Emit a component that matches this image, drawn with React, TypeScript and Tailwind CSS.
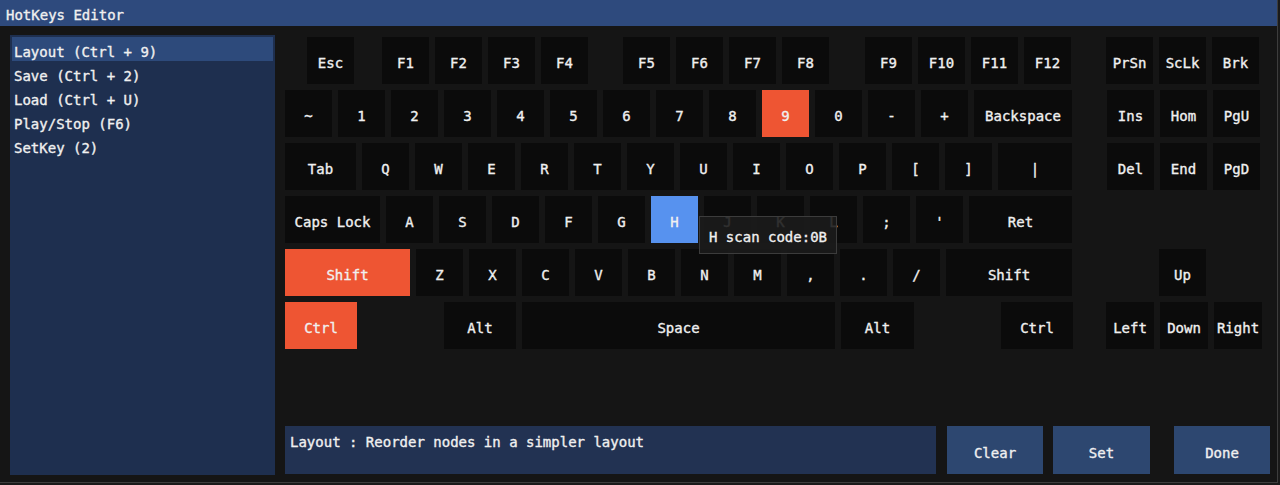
import React from "react";

type K = { l: string; w?: number; ml?: number; c?: "o" | "b" };

const rows: K[][] = [
  [
    { l: "Esc", ml: 22 },
    { l: "F1", ml: 22 },
    { l: "F2" },
    { l: "F3" },
    { l: "F4" },
    { l: "F5", ml: 29 },
    { l: "F6" },
    { l: "F7" },
    { l: "F8" },
    { l: "F9", ml: 30 },
    { l: "F10" },
    { l: "F11" },
    { l: "F12" },
    { l: "PrSn", ml: 29 },
    { l: "ScLk" },
    { l: "Brk" },
  ],
  [
    { l: "~" },
    { l: "1" },
    { l: "2" },
    { l: "3" },
    { l: "4" },
    { l: "5" },
    { l: "6" },
    { l: "7" },
    { l: "8" },
    { l: "9", c: "o" },
    { l: "0" },
    { l: "-" },
    { l: "+" },
    { l: "Backspace", w: 98 },
    { l: "Ins", ml: 29 },
    { l: "Hom" },
    { l: "PgU" },
  ],
  [
    { l: "Tab", w: 71 },
    { l: "Q" },
    { l: "W" },
    { l: "E" },
    { l: "R" },
    { l: "T" },
    { l: "Y" },
    { l: "U" },
    { l: "I" },
    { l: "O" },
    { l: "P" },
    { l: "[" },
    { l: "]" },
    { l: "|", w: 74 },
    { l: "Del", ml: 29 },
    { l: "End" },
    { l: "PgD" },
  ],
  [
    { l: "Caps Lock", w: 95 },
    { l: "A" },
    { l: "S" },
    { l: "D" },
    { l: "F" },
    { l: "G" },
    { l: "H", c: "b" },
    { l: "J" },
    { l: "K" },
    { l: "L" },
    { l: ";" },
    { l: "'" },
    { l: "Ret", w: 103 },
  ],
  [
    { l: "Shift", w: 125, c: "o" },
    { l: "Z" },
    { l: "X" },
    { l: "C" },
    { l: "V" },
    { l: "B" },
    { l: "N" },
    { l: "M" },
    { l: "," },
    { l: "." },
    { l: "/" },
    { l: "Shift", w: 126 },
    { l: "Up", ml: 81 },
  ],
  [
    { l: "Ctrl", w: 72, c: "o" },
    { l: "Alt", w: 72, ml: 81 },
    { l: "Space", w: 313 },
    { l: "Alt", w: 73 },
    { l: "Ctrl", w: 72, ml: 81 },
    { l: "Left", w: 48, ml: 27 },
    { l: "Down", w: 48 },
    { l: "Right", w: 48 },
  ],
];

function Key({ k }: { k: K }) {
  const bg =
    k.c === "o" ? "bg-[#ee5533]" : k.c === "b" ? "bg-[#5792ef]" : "bg-[#0b0b0b]";
  return (
    <div
      className={`${bg} h-[47px] shrink-0 flex items-center justify-center pt-[4px]`}
      style={{ width: k.w ?? 47, marginLeft: k.ml ?? 0 }}
    >
      {k.l}
    </div>
  );
}

const items = [
  "Layout (Ctrl + 9)",
  "Save (Ctrl + 2)",
  "Load (Ctrl + U)",
  "Play/Stop (F6)",
  "SetKey (2)",
];

export default function App() {
  return (
    <div
      className="w-[1280px] h-[485px] bg-[#1a1a1a] text-[14px] leading-none text-[#f0f0f0] overflow-hidden [-webkit-text-stroke:0.35px_#f0f0f0]"
      style={{ fontFamily: '"DejaVu Sans Mono", monospace' }}
    >
      <div className="w-[1278px] h-[483px] bg-[#151515] border-r border-b border-[#3d3d3d] flex flex-col">
        <div className="h-[26px] bg-[#2e4a7d] flex items-center pl-[6px] pt-[3px] shrink-0">
          HotKeys Editor
        </div>
        <div className="flex flex-1 pl-[10px] pt-[9px] gap-[10px]">
          <div className="w-[265px] h-[440px] bg-[#1e2f4f] p-[2px] flex flex-col">
            {items.map((t, i) => (
              <div
                key={t}
                className={`h-[24px] flex items-center pl-[2px] pt-[5px] ${
                  i === 0 ? "bg-[#2d4a7b]" : ""
                }`}
              >
                {t}
              </div>
            ))}
          </div>
          <div className="w-[985px] flex flex-col pt-[2px]">
            <div className="relative flex flex-col gap-[6px]">
              {rows.map((r, i) => (
                <div key={i} className="flex gap-[6px]">
                  {r.map((k, j) => (
                    <Key key={j} k={k} />
                  ))}
                </div>
              ))}
              <div className="absolute left-[414px] top-[179px] h-[38px] px-[9px] pt-[3px] bg-[#1b1b1b]/90 border border-[#3c3c3c] flex items-center whitespace-nowrap">
                H scan code:0B
              </div>
            </div>
            <div className="flex mt-[77px] h-[48px]">
              <div className="w-[651px] h-full bg-[#223252] px-[5px] pt-[9px]">
                Layout : Reorder nodes in a simpler layout
              </div>
              <div className="w-[96px] ml-[11px] h-full bg-[#2d4770] flex items-center justify-center pt-[5px]">
                Clear
              </div>
              <div className="w-[97px] ml-[10px] h-full bg-[#2d4770] flex items-center justify-center pt-[5px]">
                Set
              </div>
              <div className="w-[96px] ml-[24px] h-full bg-[#2d4770] flex items-center justify-center pt-[5px]">
                Done
              </div>
            </div>
          </div>
        </div>
      </div>
    </div>
  );
}
